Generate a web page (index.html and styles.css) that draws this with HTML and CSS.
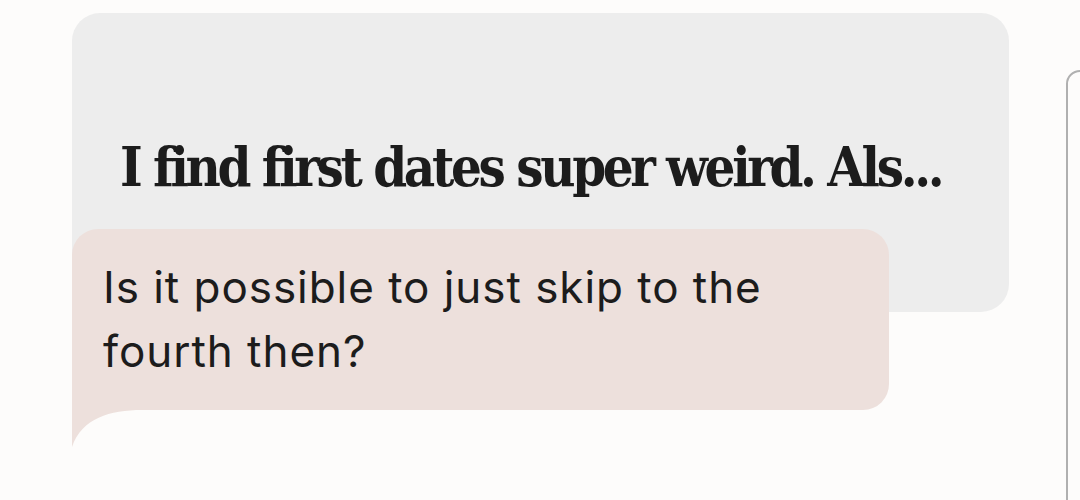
FILE: index.html
```html
<!DOCTYPE html>
<html>
<head>
<meta charset="utf-8">
<link rel="stylesheet" href="styles.css">
</head>
<body>
<div class="carousel">
  <div class="slide">
    <div class="prompt-card">
      <h1 class="prompt-text">I find first dates super weird. Als...</h1>
    </div>
    <div class="reply">
      <div class="bubble">
        <p class="bubble-text">Is it possible to just skip to the fourth then?</p>
      </div>
      <svg class="tail" width="70" height="37" viewBox="0 0 70 37"><path d="M0 0 H70 C38 0 10 8 0 37 Z" fill="#ede0dc"/></svg>
    </div>
  </div>
  <div class="next-card"></div>
</div>
</body>
</html>
```
FILE: styles.css
```css
html, body {
  margin: 0;
  padding: 0;
  background: #fdfcfb;
  width: 1080px;
  height: 500px;
  overflow: hidden;
}
.carousel {
  display: flex;
  gap: 57px;
  padding: 13px 0 0 72px;
  align-items: flex-start;
}
.slide {
  flex: 0 0 937px;
  display: flex;
  flex-direction: column;
}
.prompt-card {
  height: 299px;
  background: #ededed;
  border-radius: 28px;
  display: flex;
  align-items: center;
  padding-left: 48px;
  box-sizing: border-box;
}
.prompt-text {
  margin: 8px 0 0 0;
  font-family: "DejaVu Serif Condensed", "DejaVu Serif", serif;
  font-weight: 700;
  font-size: 54px;
  letter-spacing: -3.35px;
  color: #1c1c1c;
  white-space: nowrap;
}
.reply {
  margin-top: -83px;
  width: 817px;
  display: flex;
  flex-direction: column;
}
.bubble {
  background: #ede0dc;
  border-radius: 26px 26px 26px 0;
  height: 181px;
  box-sizing: border-box;
  padding: 26px 30px 0 31px;
}
.bubble-text {
  margin: 0;
  font-family: "Inter", sans-serif;
  font-size: 44px;
  letter-spacing: 0.95px;
  line-height: 64px;
  color: #1c1c1c;
  width: 720px;
}
.tail {
  display: block;
}
.next-card {
  flex: 0 0 200px;
  margin-top: 57px;
  height: 500px;
  border: 2px solid #b0b0b0;
  border-radius: 14px;
  box-sizing: border-box;
}
```
